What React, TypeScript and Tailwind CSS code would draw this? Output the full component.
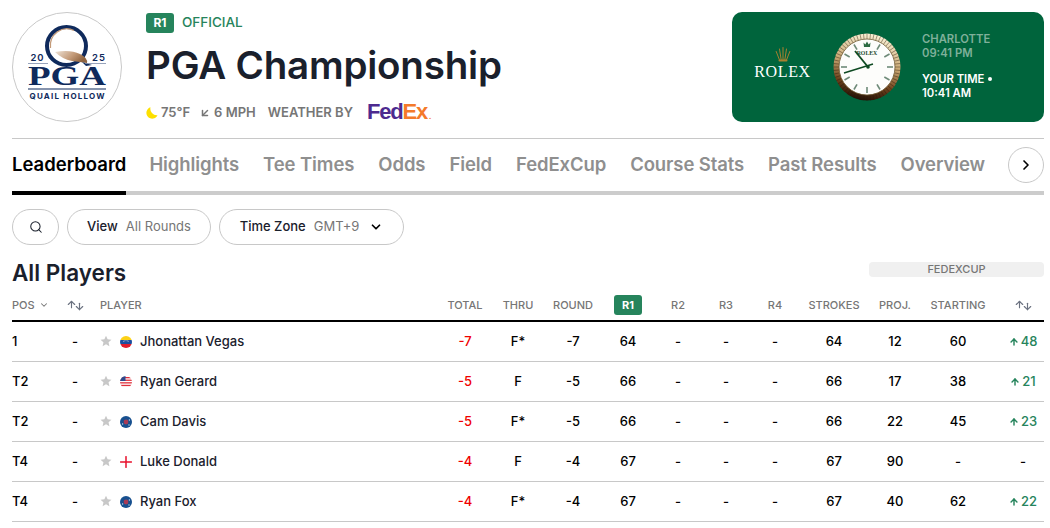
import React from 'react';
import { ArrowDownLeft, ArrowDown, ArrowUp, ChevronDown, ChevronRight, Search } from 'lucide-react';

interface PlayerRow {
  pos: string;
  name: string;
  flag: 'ven' | 'usa' | 'aus' | 'eng' | 'nzl';
  total: string;
  thru: string;
  round: string;
  r1: string;
  strokes: string;
  proj: string;
  starting: string;
  move: string;
}

const PLAYERS: PlayerRow[] = [
  { pos: '1', name: 'Jhonattan Vegas', flag: 'ven', total: '-7', thru: 'F*', round: '-7', r1: '64', strokes: '64', proj: '12', starting: '60', move: '48' },
  { pos: 'T2', name: 'Ryan Gerard', flag: 'usa', total: '-5', thru: 'F', round: '-5', r1: '66', strokes: '66', proj: '17', starting: '38', move: '21' },
  { pos: 'T2', name: 'Cam Davis', flag: 'aus', total: '-5', thru: 'F*', round: '-5', r1: '66', strokes: '66', proj: '22', starting: '45', move: '23' },
  { pos: 'T4', name: 'Luke Donald', flag: 'eng', total: '-4', thru: 'F', round: '-4', r1: '67', strokes: '67', proj: '90', starting: '-', move: '' },
  { pos: 'T4', name: 'Ryan Fox', flag: 'nzl', total: '-4', thru: 'F*', round: '-4', r1: '67', strokes: '67', proj: '40', starting: '62', move: '22' },
];

const TABS = ['Highlights', 'Tee Times', 'Odds', 'Field', 'FedExCup', 'Course Stats', 'Past Results', 'Overview'];

const GRID = 'grid grid-cols-[38px_50px_346px_38px_68px_42px_68px_32px_64px_34px_84px_38px_88px_42px] items-center';

const Cell: React.FC<{ children?: React.ReactNode; className?: string }> = ({ children, className = '' }) => (
  <div className={`flex justify-center whitespace-nowrap ${className}`}>{children}</div>
);

const SortArrows: React.FC = () => (
  <span className="flex items-center text-[#6b7280]">
    <ArrowUp size={11} strokeWidth={2.5} className="-mt-[2px] -mr-[3px]" />
    <ArrowDown size={11} strokeWidth={2.5} className="mt-[2px]" />
  </span>
);

const Flag: React.FC<{ kind: PlayerRow['flag'] }> = ({ kind }) => {
  return (
    <svg width="12" height="12" viewBox="0 0 12 12" className="shrink-0">
      <defs>
        <clipPath id={`flag-${kind}`}>
          <circle cx="6" cy="6" r="6" />
        </clipPath>
      </defs>
      <g clipPath={`url(#flag-${kind})`}>
        {kind === 'ven' && (
          <>
            <rect width="12" height="4" fill="#fcd116" />
            <rect y="4" width="12" height="4" fill="#1d4e9e" />
            <rect y="8" width="12" height="4" fill="#e21c2c" />
            <path d="M3 5.6 Q6 3.8 9 5.6" fill="none" stroke="#fff" strokeWidth="0.7" strokeDasharray="0.8 0.6" />
          </>
        )}
        {kind === 'usa' && (
          <>
            <rect width="12" height="12" fill="#fff" />
            <rect y="1" width="12" height="1.3" fill="#e0303c" />
            <rect y="3.6" width="12" height="1.3" fill="#e0303c" />
            <rect y="6.2" width="12" height="1.3" fill="#e0303c" />
            <rect y="8.8" width="12" height="1.3" fill="#e0303c" />
            <rect width="5.5" height="5" fill="#2d4a8c" />
          </>
        )}
        {(kind === 'aus' || kind === 'nzl') && (
          <>
            <rect width="12" height="12" fill="#17508f" />
            <circle cx="6" cy="6" r="2.4" fill="#a93a55" />
            <circle cx="2.6" cy="8" r="0.7" fill="#cfd8e6" />
            <circle cx="9.4" cy="4" r="0.7" fill="#cfd8e6" />
            <circle cx="9" cy="9" r="0.7" fill="#cfd8e6" />
          </>
        )}
        {kind === 'eng' && (
          <>
            <rect width="12" height="12" fill="#fff" />
            <rect x="5.25" width="1.5" height="12" fill="#e8112d" />
            <rect y="5.25" width="12" height="1.5" fill="#e8112d" />
          </>
        )}
      </g>
    </svg>
  );
};

const PgaLogo: React.FC = () => (
  <svg viewBox="0 0 110 110" width="110" height="110" className="shrink-0">
    <defs>
      <linearGradient id="feather" x1="0" x2="1" y1="0" y2="0.4">
        <stop offset="0" stopColor="#efe4d8" />
        <stop offset="0.6" stopColor="#c39a78" />
        <stop offset="1" stopColor="#8f6440" />
      </linearGradient>
    </defs>
    <circle cx="55" cy="55" r="54.5" fill="#fff" stroke="#c9c9c9" />
    {/* Q ring with the brown inner edge, feather over the tail */}
    <ellipse cx="54.500" cy="34" rx="19.500" ry="19" fill="none" stroke="#0f2a5c" strokeWidth="4" />
    <path d="M38.500 36 A16.500 17 0 0 1 62 18.500" fill="none" stroke="#c39a78" strokeWidth="1.200" />
    <path d="M43 40 Q58 37 68 42 Q76 46 75 51 Q68 50 60 49 Q50 47 43 40Z" fill="url(#feather)" />
    <path d="M70 50 L80 53 L74 54Z" fill="#0f2a5c" />
    <text x="25.500" y="49" textAnchor="middle" fontSize="9.500" fontWeight="600" letterSpacing="1" fill="#0f2a5c" fontFamily="Inter, sans-serif">20</text>
    <text x="87" y="49" textAnchor="middle" fontSize="9.500" fontWeight="600" letterSpacing="1" fill="#0f2a5c" fontFamily="Inter, sans-serif">25</text>
    <rect x="16" y="51" width="20" height="0.8" fill="#7d8cab" />
    <rect x="73" y="51" width="21" height="0.8" fill="#7d8cab" />
    <text x="55" y="73" textAnchor="middle" fontSize="27" fontWeight="700" textLength="78" lengthAdjust="spacingAndGlyphs" fill="#0f2a5c" fontFamily="'Liberation Serif', serif">PGA</text>
    <rect x="16" y="76.500" width="78" height="1" fill="#0f2a5c" />
    <text x="55" y="87" textAnchor="middle" fontSize="8" fontWeight="700" textLength="75" fill="#0f2a5c" fontFamily="Inter, sans-serif">QUAIL HOLLOW</text>
  </svg>
);

const Crown: React.FC = () => (
  <svg viewBox="0 0 16 17" width="16" height="17" fill="none" stroke="#a9802f" strokeWidth="1" strokeLinecap="round">
    <path d="M4.500 14 L1.200 5.500" />
    <path d="M6.200 14 L4.500 3" />
    <path d="M8 14 L8 1.500" />
    <path d="M9.800 14 L11.500 3" />
    <path d="M11.500 14 L14.800 5.500" />
    <path d="M4.500 14.500 H11.500" strokeWidth="2" />
  </svg>
);

const Clock: React.FC = () => {
  const flutes = Array.from({ length: 60 }, (_, i) => i * 6);
  const marks = Array.from({ length: 12 }, (_, i) => i * 30);
  return (
    <svg viewBox="0 0 68 68" width="68" height="68" className="shrink-0">
      <defs>
        <linearGradient id="bezel" x1="0.600" y1="0" x2="0.400" y2="1">
          <stop offset="0" stopColor="#fbf3d8" />
          <stop offset="0.450" stopColor="#c9a873" />
          <stop offset="0.750" stopColor="#6f431d" />
          <stop offset="1" stopColor="#1f0e04" />
        </linearGradient>
      </defs>
      <circle cx="34" cy="34" r="33.500" fill="url(#bezel)" />
      {flutes.map((a) => (
        <line key={a} x1="34" y1="0.500" x2="34" y2="6" stroke="#2a1808" strokeOpacity="0.5" strokeWidth="0.800" transform={`rotate(${a} 34 34)`} />
      ))}
      <circle cx="34" cy="34" r="28" fill="#fdfdfb" stroke="#6f5a33" strokeWidth="0.800" />
      {marks.map((a) => (
        <rect key={a} x="33.200" y="8" width="1.600" height="6" fill="#6e8a78" transform={`rotate(${a} 34 34)`} />
      ))}
      <circle cx="34" cy="11" r="4" fill="#fdfdfb" />
      <path d="M31 14 L30.500 9.500 L32.300 11.500 L34 8.500 L35.700 11.500 L37.500 9.500 L37 14Z" fill="#2c6b42" />
      <text x="34" y="22" textAnchor="middle" fontSize="5.800" fontWeight="700" fill="#1c4a2c" fontFamily="'Liberation Serif', serif">ROLEX</text>
      <line x1="35" y1="34" x2="22" y2="18" stroke="#0e4a22" strokeWidth="1.800" />
      <line x1="40" y1="31" x2="11" y2="40" stroke="#0e4a22" strokeWidth="1.500" />
      <circle cx="35" cy="34" r="1.800" fill="#0e4a22" />
    </svg>
  );
};

export default function App() {
  return (
    <div className="h-[528px] w-[1050px] overflow-hidden bg-white pt-3 pr-[6px] pl-3 font-['Inter',sans-serif] text-[#1a202c]">
      {/* Header */}
      <div className="flex h-[110px]">
        <PgaLogo />
        <div className="ml-6 flex flex-col">
          <div className="mt-[1px] flex items-center gap-2">
            <span className="flex h-5 w-7 items-center justify-center rounded-[3px] bg-[#26845c] text-xs font-bold text-white">R1</span>
            <span className="-mt-[1px] text-[13.5px] font-medium text-[#26845c]">OFFICIAL</span>
          </div>
          <h1 className="mt-[8px] text-[38.500px] leading-[48px] font-semibold tracking-[-0.2px]">PGA Championship</h1>
          <div className="mt-[10px] flex items-center text-[13px] font-semibold text-[#767676]">
            <svg viewBox="0 0 12 12" width="12" height="12" className="mr-[3px]">
              <path d="M4.500 0.300 A5.800 5.800 0 1 0 11.500 8.200 A6.500 6.500 0 0 1 4.500 0.300Z" fill="#fde000" />
            </svg>
            <span>75°F</span>
            <ArrowDownLeft size={12} strokeWidth={3} className="mr-[3px] ml-[9px]" />
            <span>6 MPH</span>
            <span className="ml-[12px]">WEATHER BY</span>
            <span className="mt-[3px] ml-[14px] font-['Liberation_Sans',sans-serif] text-[22px] leading-5 font-bold tracking-[-1.200px]">
              <span className="text-[#4d2a8f]">Fed</span>
              <span className="text-[#f47a2a]">Ex</span>
              <span className="ml-[2px] text-[8px] text-[#f47a2a]">.</span>
            </span>
          </div>
        </div>
        <div className="ml-auto flex w-[312px] items-center rounded-[10px] bg-[#00643c]">
          <div className="mb-[8px] ml-[22px] flex w-[57px] flex-col items-center">
            <Crown />
            <span className="mt-[1px] font-['Liberation_Serif',serif] text-[16px] leading-4 tracking-[0.6px] text-white">ROLEX</span>
          </div>
          <div className="mb-[1px] ml-[22px]">
            <Clock />
          </div>
          <div className="mb-[2px] ml-[21px] text-[11.250px] leading-[14px] font-semibold">
            <div className="text-[#7fb09a]">CHARLOTTE</div>
            <div className="text-[#7fb09a]">09:41 PM</div>
            <div className="mt-[12px] flex items-center gap-[4px] text-white">
              YOUR TIME <span className="h-1 w-1 rounded-full bg-white" />
            </div>
            <div className="text-white">10:41 AM</div>
          </div>
        </div>
      </div>

      {/* Tabs */}
      <div className="mt-4 border-t border-[#c8c8c8]">
        <div className="flex h-[56px] items-start border-b-4 border-[#cccccc]">
          <div className="h-[56px] border-b-4 border-black pt-[13px] text-[18.500px] leading-6 font-semibold text-black">Leaderboard</div>
          <div className="ml-[23px] flex gap-6 pt-[13px] text-[18.500px] leading-6 font-semibold tracking-[-0.1px] whitespace-nowrap text-[#8f8f8f]">
            {TABS.map((tab) => (
              <span key={tab}>{tab}</span>
            ))}
          </div>
          <button className="mt-[8px] ml-auto flex h-9 w-9 items-center justify-center rounded-full border border-[#c8c8c8] bg-white text-black">
            <ChevronRight size={16} strokeWidth={2.5} />
          </button>
        </div>
      </div>

      {/* Filters */}
      <div className="mt-[14px] flex gap-2 text-[13px] font-medium">
        <button className="flex h-9 w-[47px] items-center justify-center rounded-full border border-[#c8c8c8]">
          <Search size={14} strokeWidth={1.8} />
        </button>
        <button className="flex h-9 w-[144px] items-center justify-center gap-2 rounded-full border border-[#c8c8c8]">
          <span>View</span>
          <span className="font-normal text-[#767676]">All Rounds</span>
        </button>
        <button className="flex h-9 w-[185px] items-center justify-center gap-2 rounded-full border border-[#c8c8c8]">
          <span>Time Zone</span>
          <span className="font-normal text-[#767676]">GMT+9</span>
          <ChevronDown size={14} strokeWidth={3} className="ml-[2px] text-black" />
        </button>
      </div>

      {/* Table title */}
      <div className="mt-[14px] flex h-7 items-center justify-between">
        <h2 className="text-[22.500px] leading-7 font-semibold">All Players</h2>
        <div className="mb-[7px] flex h-[15px] w-[175px] items-center justify-center rounded bg-[#f0f0f0] text-[11px] font-medium text-[#767676]">FEDEXCUP</div>
      </div>

      {/* Table header */}
      <div className={`${GRID} mt-[6px] h-[29px] border-b-2 border-black pb-[3px] text-[11px] font-medium text-[#767676]`}>
        <div className="flex items-center gap-1">
          POS <ChevronDown size={10} strokeWidth={2.5} />
        </div>
        <Cell>
          <SortArrows />
        </Cell>
        <div>PLAYER</div>
        <Cell>TOTAL</Cell>
        <Cell>THRU</Cell>
        <Cell>ROUND</Cell>
        <Cell>
          <span className="flex h-5 w-7 items-center justify-center rounded-[3px] bg-[#26845c] font-bold text-white">R1</span>
        </Cell>
        <Cell>R2</Cell>
        <Cell>R3</Cell>
        <Cell>R4</Cell>
        <Cell>STROKES</Cell>
        <Cell>PROJ.</Cell>
        <Cell>STARTING</Cell>
        <Cell>
          <SortArrows />
        </Cell>
      </div>

      {/* Rows */}
      {PLAYERS.map((p) => (
        <div key={p.name} className={`${GRID} h-10 border-b border-[#c8c8c8] text-[13px] font-medium text-black`}>
          <div>{p.pos}</div>
          <Cell>-</Cell>
          <div className="flex items-center text-[#1a202c]">
            <svg viewBox="0 0 24 24" width="12" height="12" className="-mt-[2px] mr-[8px] shrink-0" fill="#c8c8c8">
              <path d="M12 1.500 15.200 8.700 23 9.500 17.100 14.700 18.800 22.400 12 18.400 5.200 22.400 6.900 14.700 1 9.500 8.800 8.700Z" />
            </svg>
            <Flag kind={p.flag} />
            <span className="ml-[8px]">{p.name}</span>
          </div>
          <Cell className="text-[#f00000]">{p.total}</Cell>
          <Cell>{p.thru}</Cell>
          <Cell>{p.round}</Cell>
          <Cell>{p.r1}</Cell>
          <Cell>-</Cell>
          <Cell>-</Cell>
          <Cell>-</Cell>
          <Cell>{p.strokes}</Cell>
          <Cell>{p.proj}</Cell>
          <Cell>{p.starting}</Cell>
          <Cell className="items-center text-[#26845c]">
            {p.move ? (
              <>
                <ArrowUp size={10} strokeWidth={3.500} className="mr-[2px]" />
                {p.move}
              </>
            ) : (
              <span className="text-black">-</span>
            )}
          </Cell>
        </div>
      ))}
    </div>
  );
}
